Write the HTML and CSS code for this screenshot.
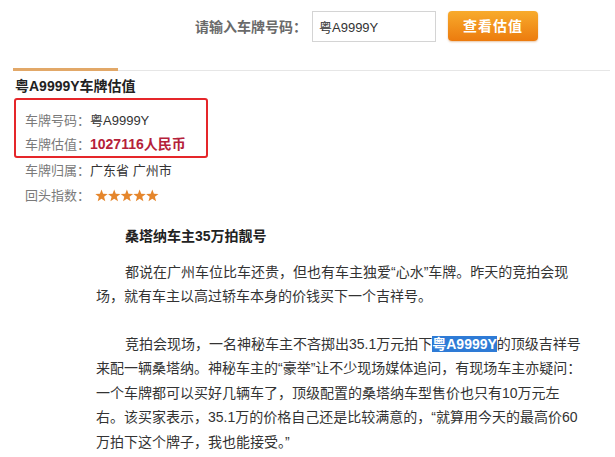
FILE: index.html
```html
<!DOCTYPE html>
<html lang="zh-CN">
<head>
    <meta charset="UTF-8">
    <title>车牌估值</title>
    <link rel="stylesheet" href="styles.css">
</head>
<body>

<div class="search">
    <label class="search-label" for="plate">请输入车牌号码：</label>
    <input class="search-input" id="plate" type="text" value="粤A9999Y">
    <a class="search-btn" href="#">查看估值</a>
</div>

<div class="panel">
    <div class="tab-line"><span class="tab-active"></span><span class="tab-rest"></span></div>
    <h2 class="plate-title">粤A9999Y车牌估值</h2>
    <div class="result-box">
        <div class="row"><span class="label">车牌号码：</span><span class="value">粤A9999Y</span></div>
        <div class="row row-price"><span class="label">车牌估值：</span><strong class="price">1027116人民币</strong></div>
    </div>
    <div class="row row-plain"><span class="label">车牌归属：</span><span class="value">广东省 广州市</span></div>
    <div class="row row-plain">
        <span class="label">回头指数：</span>
        <svg class="stars" width="64" height="13" viewBox="0 0 64 13">
            <defs>
                <polygon id="star" points="6.5,0.5 8.1,4.8 12.7,5 9.1,7.8 10.3,12.3 6.5,9.7 2.7,12.3 3.9,7.8 0.3,5 4.9,4.8"/>
            </defs>
            <use href="#star" x="0"/>
            <use href="#star" x="12.7"/>
            <use href="#star" x="25.4"/>
            <use href="#star" x="38.1"/>
            <use href="#star" x="50.8"/>
        </svg>
    </div>
</div>

<div class="article">
    <h3 class="article-title">桑塔纳车主35万拍靓号</h3>
    <p class="para">都说在广州车位比车还贵，但也有车主独爱“心水”车牌。昨天的竞拍会现<br>场，就有车主以高过轿车本身的价钱买下一个吉祥号。</p>
    <p class="para para-gap">竞拍会现场，一名神秘车主不吝掷出35.1万元拍下<span class="mark">粤A9999Y</span>的顶级吉祥号<br>来配一辆桑塔纳。神秘车主的“豪举”让不少现场媒体追问，有现场车主亦疑问：<br>一个车牌都可以买好几辆车了，顶级配置的桑塔纳车型售价也只有10万元左<br>右。该买家表示，35.1万的价格自己还是比较满意的，“就算用今天的最高价60<br>万拍下这个牌子，我也能接受。”</p>
</div>

</body>
</html>
```

FILE: styles.css
```css
body {
    margin: 0;
    background: #fff;
    color: #333;
    font-family: "Liberation Sans", "Noto Sans CJK SC", sans-serif;
}

a {
    text-decoration: none;
}

.search {
    display: flex;
    align-items: center;
    height: 32px;
    padding: 10px 0 0 195px;
}

.search-label {
    font-size: 14px;
    font-weight: bold;
    color: #6a6a6a;
}

.search-input {
    box-sizing: border-box;
    width: 124px;
    height: 31px;
    margin-left: 5px;
    padding: 0 6px;
    border: 1px solid #d4d4d4;
    font-family: inherit;
    font-size: 13px;
    color: #333;
    outline: none;
}

.search-btn {
    display: block;
    width: 90px;
    line-height: 30px;
    margin-left: 12px;
    border-radius: 4px;
    background: linear-gradient(#f8ab2c, #ec7b0e);
    box-shadow: 0 1px 2px rgba(180, 90, 0, .35);
    color: #fff;
    font-size: 14px;
    font-weight: bold;
    text-align: center;
    letter-spacing: 1px;
}

.panel {
    padding-left: 14px;
}

.tab-line {
    display: flex;
    align-items: flex-end;
    margin: 26px 5px 0 -1px;
}

.tab-active {
    width: 105px;
    height: 3px;
    background: #e2a868;
}

.tab-rest {
    flex: 1;
    height: 1px;
    background: #e6e6e6;
}

.plate-title {
    margin: 5px 0 2px 1px;
    font-size: 14px;
    line-height: 20px;
    color: #222;
}

.result-box {
    width: 181px;
    padding: 8px 0 0 9px;
    border: 2px solid #e5262a;
    border-radius: 3px;
}

.row {
    display: flex;
    align-items: center;
    font-size: 13px;
    line-height: 25px;
    white-space: nowrap;
}

.row-price {
    line-height: 23px;
}

.row-plain {
    padding-left: 11px;
}

.label {
    color: #7a7a7a;
}

.value {
    color: #333;
}

.price {
    color: #b5213a;
    font-size: 14px;
}

.stars {
    margin-left: 5px;
    fill: #e5862c;
}

.article {
    padding: 0 20px 0 96px;
}

.article-title {
    margin: 16px 0 0;
    padding-left: 29px;
    font-size: 14px;
    line-height: 24.5px;
    color: #222;
}

.para {
    margin: 11px 0 0;
    font-size: 14px;
    line-height: 24.5px;
    text-indent: 29px;
    white-space: nowrap;
    color: #333;
}

.para-gap {
    margin-top: 23px;
}

.mark {
    background: #2e7bd6;
    color: #fff;
    font-weight: bold;
}
```
